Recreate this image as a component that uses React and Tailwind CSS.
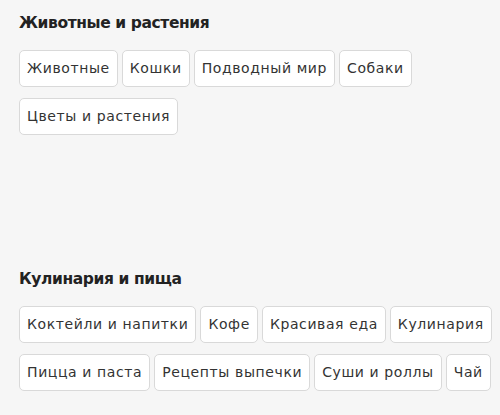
import React from "react";

const sections = [
  {
    title: "Животные и растения",
    tags: ["Животные", "Кошки", "Подводный мир", "Собаки", "Цветы и растения"],
  },
  {
    title: "Кулинария и пища",
    tags: [
      "Коктейли и напитки",
      "Кофе",
      "Красивая еда",
      "Кулинария",
      "Пицца и паста",
      "Рецепты выпечки",
      "Суши и роллы",
      "Чай",
    ],
  },
];

export default function App() {
  return (
    <div className="min-h-screen w-[500px] h-[415px] overflow-hidden bg-[#f6f6f6] font-['DejaVu_Sans',Verdana,sans-serif] text-[#333]">
      <div className="pl-[19px] pr-1 pt-[13px]">
        {sections.map((s, i) => (
          <section key={i} className={i === 0 ? "h-[256px]" : ""}>
            <h2 className="text-[15.5px] font-bold tracking-[-0.4px] text-[#222] leading-[20px] mb-[17px]">{s.title}</h2>
            <div className="flex flex-wrap gap-x-1 gap-y-[11px]">
              {s.tags.map((t) => (
                <span
                  key={t}
                  className="h-[37px] flex items-center px-[7px] bg-white border border-[#d9d9d9] rounded-[5px] text-[14px] tracking-[0.6px] text-[#333] whitespace-nowrap"
                >
                  {t}
                </span>
              ))}
            </div>
          </section>
        ))}
      </div>
    </div>
  );
}
